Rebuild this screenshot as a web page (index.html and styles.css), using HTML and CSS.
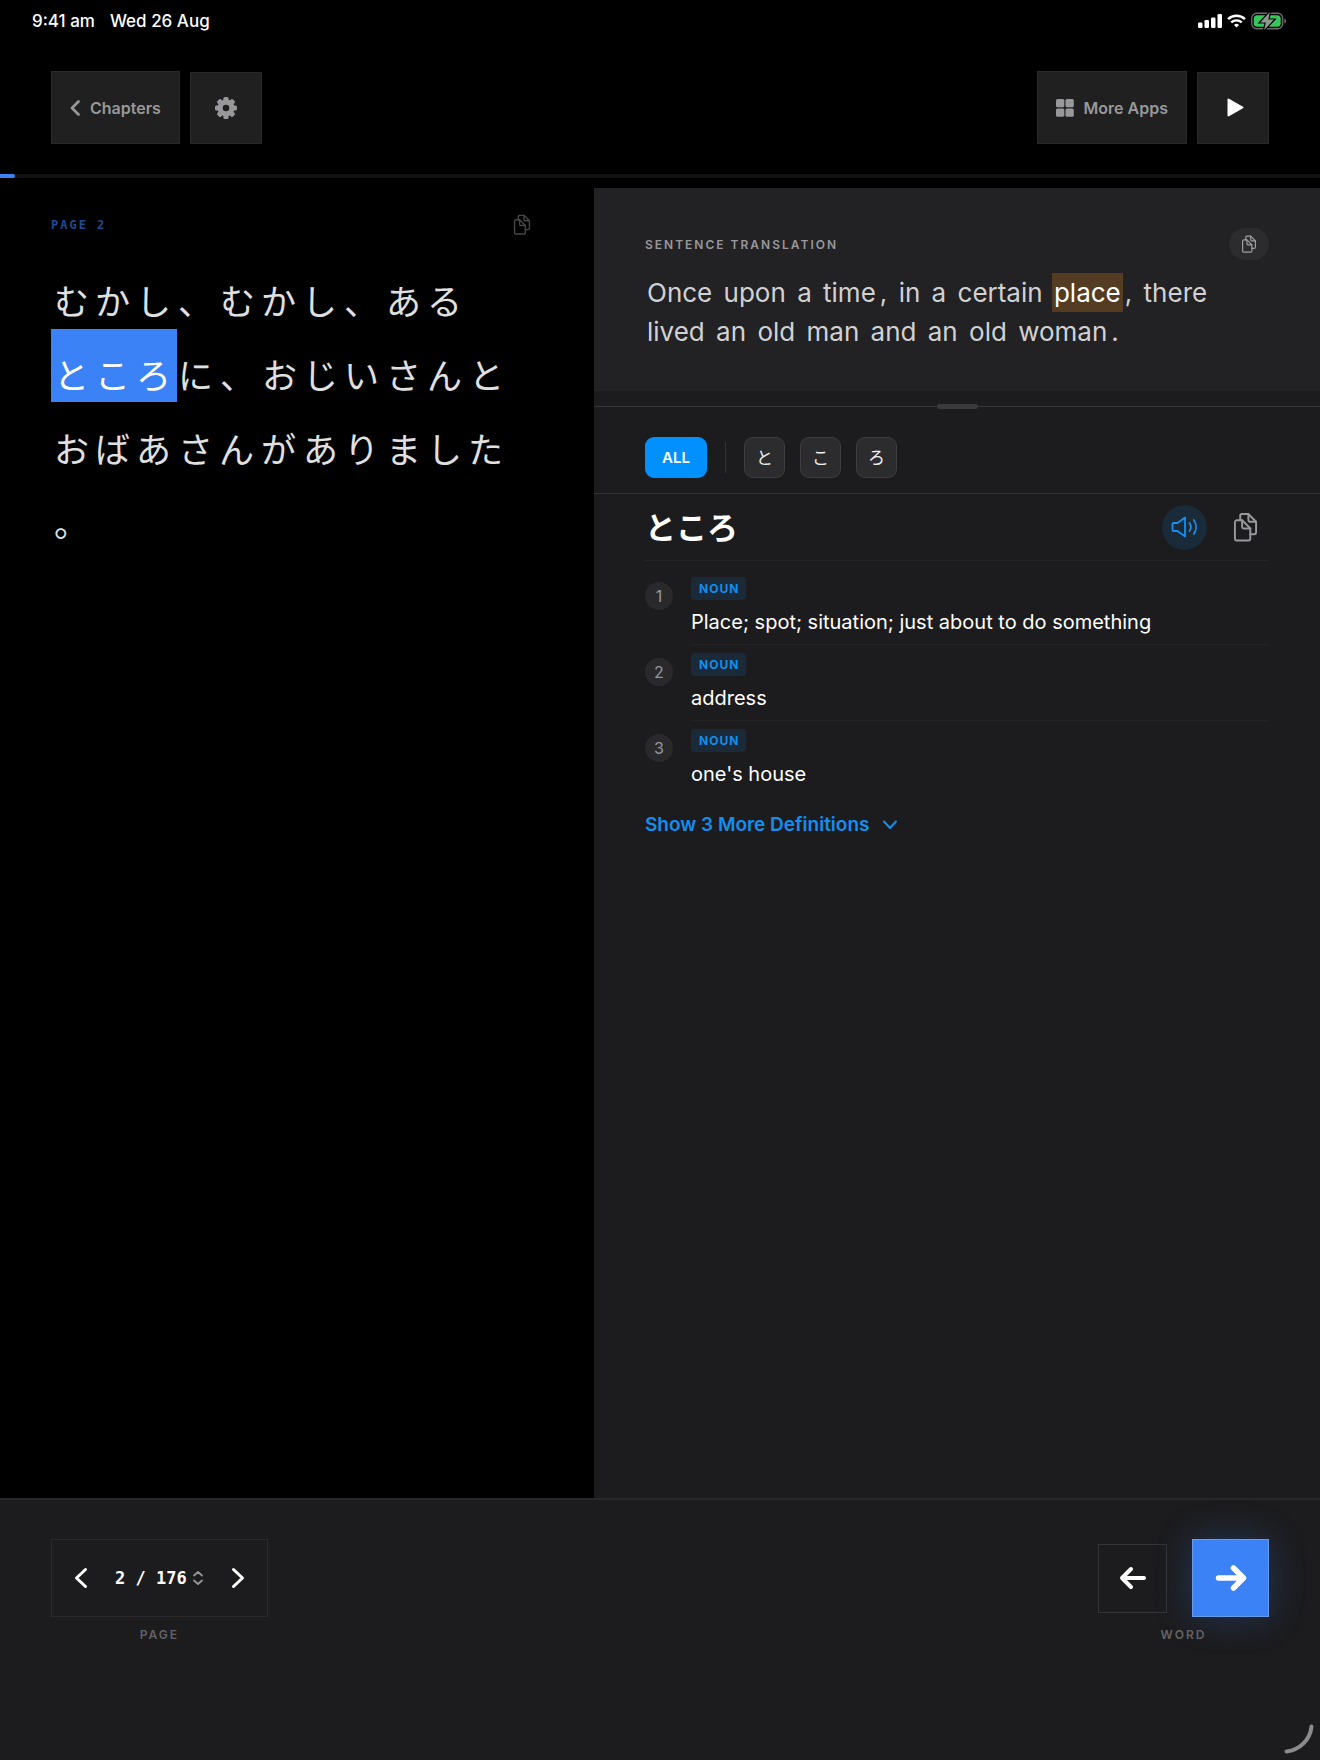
FILE: index.html
```html
<!DOCTYPE html>
<html lang="en">
<head>
    <meta charset="UTF-8">
    <meta name="viewport" content="width=device-width, initial-scale=1.0">
    <title>Reader</title>
    <link rel="stylesheet" href="styles.css">
</head>
<body>
    <!-- Shared icons -->
    <svg class="sprite" aria-hidden="true">
        <symbol id="icon-copy" viewBox="0 0 26 31">
            <g fill="none" stroke="currentColor" stroke-width="2" stroke-linejoin="round" stroke-linecap="round">
                <path d="M4 8.500H9.500L18 17V27.500a2 2 0 0 1-2 2H4a2 2 0 0 1-2-2V10.500a2 2 0 0 1 2-2z"/>
                <path d="M9.500 8.500V15.500a1.500 1.500 0 0 0 1.500 1.500H18"/>
                <path d="M7.500 8.500V4a2 2 0 0 1 2-2H16L24 10V21a2 2 0 0 1-2 2H18"/>
                <path d="M16 2V8.500a1.500 1.500 0 0 0 1.500 1.500H24"/>
            </g>
        </symbol>
    </svg>

    <div class="status-bar">
        <div class="status-time">
            <span>9:41 am</span>
            <span>Wed 26 Aug</span>
        </div>
        <div class="status-icons">
            <svg width="24" height="14" viewBox="0 0 24 14" fill="#fff">
                <rect x="0" y="8.500" width="4.500" height="5.500" rx="1.200"/>
                <rect x="6.500" y="6" width="4.500" height="8" rx="1.200"/>
                <rect x="13" y="3.500" width="4.500" height="10.500" rx="1.200"/>
                <rect x="19.500" y="0" width="4.500" height="14" rx="1.200"/>
            </svg>
            <svg width="19" height="14" viewBox="0 0 18 13" fill="none" stroke="#fff" stroke-width="2.300">
                <path d="M1 4.700a11.500 11.500 0 0 1 16 0"/>
                <path d="M4 7.900a7.200 7.200 0 0 1 10 0"/>
                <path d="M9 12.700L6.600 10.300a3.500 3.500 0 0 1 4.800 0z" fill="#fff" stroke="none"/>
            </svg>
            <svg width="36" height="18" viewBox="0 0 36 18">
                <rect x="0.750" y="1.250" width="31" height="15.500" rx="5" fill="none" stroke="#6b6b6d" stroke-width="1.300"/>
                <path d="M33.300 6.500v5c1.100-.4 1.800-1.300 1.800-2.500s-.7-2.100-1.800-2.500z" fill="#6b6b6d"/>
                <rect x="2.700" y="3.200" width="27" height="11.600" rx="3.500" fill="#34c759"/>
                <path d="M18.800 0L9.300 10.400h5.500L13.200 18 23 7.600h-5.700z" fill="#8d9a90" stroke="#000" stroke-width="2.400" paint-order="stroke"/>
            </svg>
        </div>
    </div>

    <header class="toolbar">
        <div class="toolbar-group">
            <button class="tool-btn tool-btn-text">
                <svg width="10" height="16" viewBox="0 0 10 16" fill="none" stroke="currentColor" stroke-width="2.600" stroke-linecap="round" stroke-linejoin="round"><path d="M8.500 1.500L2 8l6.500 6.500"/></svg>
                Chapters
            </button>
            <button class="tool-btn tool-btn-icon" aria-label="Settings">
                <svg width="22" height="22" viewBox="0 0 22 22">
                    <g fill="currentColor">
                        <rect x="8.400" y="0" width="5.200" height="22" rx="1.500"/>
                        <rect x="8.400" y="0" width="5.200" height="22" rx="1.500" transform="rotate(45 11 11)"/>
                        <rect x="8.400" y="0" width="5.200" height="22" rx="1.500" transform="rotate(90 11 11)"/>
                        <rect x="8.400" y="0" width="5.200" height="22" rx="1.500" transform="rotate(135 11 11)"/>
                        <circle cx="11" cy="11" r="8.500"/>
                    </g>
                    <circle cx="11" cy="11" r="3.300" fill="#202020"/>
                </svg>
            </button>
        </div>
        <div class="toolbar-group">
            <button class="tool-btn tool-btn-text">
                <svg width="18" height="18" viewBox="0 0 18 18" fill="currentColor">
                    <rect x="0" y="0" width="8.300" height="8.300" rx="1.500"/>
                    <rect x="9.500" y="0" width="8.300" height="8.300" rx="1.500"/>
                    <rect x="0" y="9.500" width="8.300" height="8.300" rx="1.500"/>
                    <rect x="9.500" y="9.500" width="8.300" height="8.300" rx="1.500"/>
                </svg>
                More Apps
            </button>
            <button class="tool-btn tool-btn-icon play" aria-label="Play">
                <svg width="17" height="19" viewBox="0 0 17 19" fill="currentColor" stroke="currentColor" stroke-width="2" stroke-linejoin="round"><path d="M1.500 1.500v16L15.500 9.500z"/></svg>
            </button>
        </div>
    </header>

    <div class="progress" role="progressbar" aria-valuenow="2" aria-valuemin="0" aria-valuemax="176">
        <div class="progress-fill" style="width: 1.14%"></div>
    </div>

    <main class="reader">
        <section class="page">
            <div class="page-head">
                <h2 class="page-label">PAGE 2</h2>
                <button class="copy-btn copy-page" aria-label="Copy page"><svg width="18" height="21"><use href="#icon-copy"/></svg></button>
            </div>
            <p class="page-text" lang="ja">
                <span>むかし</span><span>、</span><span>むかし</span><span>、</span><span>ある</span>
                <span class="selected">ところ</span><span>に</span><span>、</span><span>おじい</span><span>さん</span><span>と</span>
                <span>おばあ</span><span>さん</span><span>が</span><span>あり</span><span>ました</span><span>。</span>
            </p>
        </section>

        <section class="panel">
            <div class="translation">
                <div class="translation-head">
                    <h2 class="caption">SENTENCE TRANSLATION</h2>
                    <button class="copy-btn copy-round" aria-label="Copy translation"><svg width="16" height="18"><use href="#icon-copy"/></svg></button>
                </div>
                <p class="sentence">
                    <span>Once</span> <span>upon</span> <span>a</span> <span>time</span><span>,</span> <span>in</span> <span>a</span> <span>certain</span> <mark>place</mark><span>,</span> <span>there</span> <span>lived</span> <span>an</span> <span>old</span> <span>man</span> <span>and</span> <span>an</span> <span>old</span> <span>woman</span><span>.</span>
                </p>
            </div>

            <div class="resize"><div class="resize-handle"></div></div>

            <div class="chars">
                <button class="char-btn active">ALL</button>
                <div class="chars-divider"></div>
                <button class="char-btn" lang="ja">と</button>
                <button class="char-btn" lang="ja">こ</button>
                <button class="char-btn" lang="ja">ろ</button>
            </div>

            <div class="entry">
                <div class="entry-head">
                    <h1 class="entry-word" lang="ja">ところ</h1>
                    <div class="entry-actions">
                        <button class="speak-btn" aria-label="Listen">
                            <svg width="27" height="22" viewBox="0 0 27 22" fill="none" stroke="currentColor" stroke-width="1.800" stroke-linecap="round" stroke-linejoin="round">
                                <path d="M2.500 7h4L14 1.500v19L6.500 15h-4A1 1 0 0 1 1.500 14V8a1 1 0 0 1 1-1z"/>
                                <path d="M18.500 7a7 7 0 0 1 0 8"/>
                                <path d="M22.800 4a12 12 0 0 1 0 14"/>
                            </svg>
                        </button>
                        <button class="copy-btn copy-entry" aria-label="Copy word"><svg width="25" height="30"><use href="#icon-copy"/></svg></button>
                    </div>
                </div>

                <ol class="definitions">
                    <li class="definition">
                        <span class="number">1</span>
                        <div class="meaning"><span class="tag">NOUN</span><p>Place; spot; situation; just about to do something</p></div>
                    </li>
                    <li class="definition">
                        <span class="number">2</span>
                        <div class="meaning"><span class="tag">NOUN</span><p>address</p></div>
                    </li>
                    <li class="definition">
                        <span class="number">3</span>
                        <div class="meaning"><span class="tag">NOUN</span><p>one's house</p></div>
                    </li>
                </ol>

                <button class="more-btn">
                    Show 3 More Definitions
                    <svg width="16" height="10" viewBox="0 0 16 10" fill="none" stroke="currentColor" stroke-width="2" stroke-linecap="round" stroke-linejoin="round"><path d="M2 1.500l6 6.500 6-6.500"/></svg>
                </button>
            </div>
        </section>
    </main>

    <footer class="footer">
        <div class="control">
            <div class="pager">
                <button class="pager-arrow" aria-label="Previous page"><svg width="14" height="22" viewBox="0 0 14 22" fill="none" stroke="currentColor" stroke-width="3" stroke-linecap="round" stroke-linejoin="round"><path d="M11.500 2.500L2.500 11l9 8.500"/></svg></button>
                <button class="pager-count">
                    2 / 176
                    <svg width="10" height="14" viewBox="0 0 10 14" fill="none" stroke="#98989d" stroke-width="1.700" stroke-linecap="round" stroke-linejoin="round"><path d="M1 4.500L5 1l4 3.500M1 9.500L5 13l4-3.500"/></svg>
                </button>
                <button class="pager-arrow" aria-label="Next page"><svg width="14" height="22" viewBox="0 0 14 22" fill="none" stroke="currentColor" stroke-width="3" stroke-linecap="round" stroke-linejoin="round"><path d="M2.500 2.500l9 8.500-9 8.500"/></svg></button>
            </div>
            <span class="control-label">PAGE</span>
        </div>
        <div class="control">
            <div class="word-nav">
                <button class="word-btn" aria-label="Previous word"><svg width="28" height="24" viewBox="0 0 28 24" fill="none" stroke="currentColor" stroke-width="4" stroke-linecap="round" stroke-linejoin="round"><path d="M25 12H3M12 3L3 12l9 9"/></svg></button>
                <button class="word-btn next" aria-label="Next word"><svg width="32" height="28" viewBox="0 0 32 28" fill="none" stroke="currentColor" stroke-width="5.500" stroke-linecap="round" stroke-linejoin="round"><path d="M3.500 14H28M18.500 4L28.500 14l-10 10"/></svg></button>
            </div>
            <span class="control-label">WORD</span>
        </div>
    </footer>

    <svg class="corner" width="30" height="30" viewBox="0 0 30 30" fill="none" stroke="#8b8b8d" stroke-width="4" stroke-linecap="round"><path d="M27.500 2.500A28 28 0 0 1 2.500 27.500"/></svg>
</body>
</html>
```
FILE: styles.css
```css
* {
    box-sizing: border-box;
}

body {
    margin: 0;
    min-height: 100vh;
    display: flex;
    flex-direction: column;
    background-color: #000;
    color: #fff;
    font-family: Inter, "Noto Sans CJK JP", sans-serif;
}

h1, h2, p, ol {
    margin: 0;
    padding: 0;
}

button {
    display: flex;
    align-items: center;
    justify-content: center;
    padding: 0;
    border: none;
    background: none;
    color: inherit;
    font-family: inherit;
    cursor: pointer;
}

svg {
    display: block;
    flex-shrink: 0;
}

.sprite {
    position: absolute;
    width: 0;
    height: 0;
}

/* Status bar */
.status-bar {
    display: flex;
    justify-content: space-between;
    align-items: center;
    height: 41px;
    padding: 0 33px 0 32px;
    font-size: 17px;
    font-weight: 500;
}

.status-time {
    display: flex;
    gap: 15px;
}

.status-icons {
    display: flex;
    align-items: center;
    gap: 5px;
}

/* Toolbar */
.toolbar {
    display: flex;
    justify-content: space-between;
    padding: 30px 51px;
}

.toolbar-group {
    display: flex;
    align-items: center;
    gap: 10px;
}

.tool-btn {
    height: 73px;
    background-color: #202020;
    border: 1px solid #2a2a2a;
    color: #98989a;
}

.tool-btn-text {
    gap: 10px;
    padding: 0 18px;
    font-size: 16px;
    font-weight: 600;
}

.tool-btn-icon {
    width: 72px;
    height: 72px;
}

.play {
    padding-left: 4px;
    color: #fff;
}

.progress {
    height: 4px;
    background-color: #111112;
}

.progress-fill {
    height: 100%;
    background-color: #3b82f6;
    border-radius: 0 2px 2px 0;
}

/* Reader */
.reader {
    flex: 1;
    display: grid;
    grid-template-columns: 45fr 55fr;
    padding-top: 10px;
}

.page {
    padding: 26px 51px;
}

.page-head {
    display: flex;
    justify-content: space-between;
    align-items: center;
    padding-right: 12px;
}

.page-label {
    font-family: "DejaVu Sans Mono", monospace;
    font-size: 12px;
    font-weight: 700;
    letter-spacing: 2px;
    color: #1f4b91;
}

.copy-page {
    color: #48484a;
}

.page-text {
    display: flex;
    flex-wrap: wrap;
    column-gap: 1px;
    row-gap: 1px;
    margin-top: 20px;
    padding-left: 3px;
    font-family: "Noto Sans CJK JP", sans-serif;
    font-size: 35px;
    line-height: 56px;
    letter-spacing: 6px;
    color: #e0e0e0;
}

.page-text span {
    padding-top: 17px;
}

.page-text .selected {
    margin-left: -3px;
    padding-left: 3px;
    background-color: #3b82f6;
    color: #fff;
}

/* Translation panel */
.panel {
    background-color: #1c1c1e;
}

.translation {
    padding: 40px 51px 40px;
    background-color: #222224;
}

.translation-head {
    display: flex;
    justify-content: space-between;
    align-items: center;
}

.caption {
    font-size: 12px;
    font-weight: 600;
    letter-spacing: 2px;
    color: #98989d;
}

.copy-round {
    width: 40px;
    height: 32px;
    border-radius: 16px;
    background-color: #2c2c2e;
    color: #a0a0a5;
}

.sentence {
    margin-top: 13px;
    font-size: 26px;
    line-height: 39px;
    color: #d1d1d3;
}

.sentence span,
.sentence mark {
    display: inline-block;
    padding: 0 2px;
}

.sentence mark {
    background-color: #543c22;
    color: #fff;
}

.resize {
    display: flex;
    justify-content: center;
    align-items: flex-end;
    height: 16px;
    border-bottom: 1px solid #38383a;
}

.resize-handle {
    width: 41px;
    height: 5px;
    margin-bottom: -3px;
    border-radius: 3px;
    background-color: #3a3a3c;
}

.chars {
    display: flex;
    align-items: center;
    gap: 15px;
    padding: 30px 51px 15px;
    border-bottom: 1px solid #323234;
}

.char-btn {
    width: 41px;
    height: 41px;
    padding-bottom: 2px;
    border: 1px solid #3e3e40;
    border-radius: 9px;
    background-color: #2c2c2e;
    font-size: 17px;
    color: #ededed;
}

.char-btn.active {
    width: 62px;
    padding-bottom: 0;
    border: none;
    background-color: #0091ff;
    font-size: 15px;
    font-weight: 600;
    color: #fff;
}

.chars-divider {
    width: 1px;
    height: 31px;
    margin: 0 3px;
    background-color: #323234;
}

/* Dictionary entry */
.entry {
    padding: 0 51px;
}

.entry-head {
    display: flex;
    justify-content: space-between;
    align-items: center;
    height: 67px;
    border-bottom: 1px solid #252527;
}

.entry-word {
    padding-bottom: 4px;
    font-size: 31px;
    font-weight: 700;
}

.entry-actions {
    display: flex;
    align-items: center;
    gap: 26px;
    padding-right: 11px;
}

.speak-btn {
    width: 45px;
    height: 45px;
    border-radius: 50%;
    background-color: #192a38;
    color: #1a8fec;
}

.copy-entry {
    color: #98989d;
}

.definitions {
    list-style: none;
    padding-top: 8px;
}

.definition {
    display: flex;
    gap: 18px;
}

.number {
    width: 28px;
    height: 28px;
    margin-top: 13px;
    border-radius: 50%;
    background-color: #29292b;
    color: #98989d;
    font-size: 16px;
    line-height: 28px;
    text-align: center;
}

.meaning {
    flex: 1;
    padding: 8px 0;
    border-bottom: 1px solid #232325;
}

.definition:last-child .meaning {
    border-bottom: none;
}

.tag {
    display: block;
    width: fit-content;
    padding: 0 7px 0 8px;
    border-radius: 4px;
    background-color: #1a2a38;
    color: #128fef;
    font-size: 12px;
    font-weight: 700;
    line-height: 23px;
    letter-spacing: 1px;
}

.meaning p {
    margin-top: 8px;
    font-size: 20px;
    line-height: 28px;
}

.more-btn {
    gap: 13px;
    margin-top: 17px;
    font-size: 19px;
    font-weight: 600;
    line-height: 24px;
    color: #128fef;
}

/* Footer */
.footer {
    display: flex;
    justify-content: space-between;
    align-items: flex-start;
    padding: 39px 51px 117px;
    border-top: 2px solid #272729;
    background-color: #1c1c1e;
}

.control {
    display: flex;
    flex-direction: column;
    align-items: center;
    gap: 10px;
}

.control-label {
    font-size: 12px;
    font-weight: 600;
    line-height: 16px;
    letter-spacing: 2px;
    color: #636366;
}

.pager {
    display: flex;
    align-items: center;
    height: 78px;
    border: 1px solid #2a2a2c;
}

.pager-arrow {
    width: 58px;
    height: 58px;
}

.pager-count {
    gap: 6px;
    padding: 0 6px 0 5px;
    font-family: "DejaVu Sans Mono", monospace;
    font-size: 17px;
    font-weight: 700;
}

.word-nav {
    display: flex;
    align-items: center;
    gap: 25px;
}

.word-btn {
    width: 69px;
    height: 69px;
    border: 1px solid #343436;
}

.word-btn.next {
    width: 77px;
    height: 78px;
    border-color: #6b9ae6;
    background-color: #3b82f6;
    box-shadow: 0 0 36px rgba(59, 130, 246, 0.25);
}

/* corner pull handle over the footer */
.corner {
    position: fixed;
    right: 6px;
    bottom: 6px;
}
```
